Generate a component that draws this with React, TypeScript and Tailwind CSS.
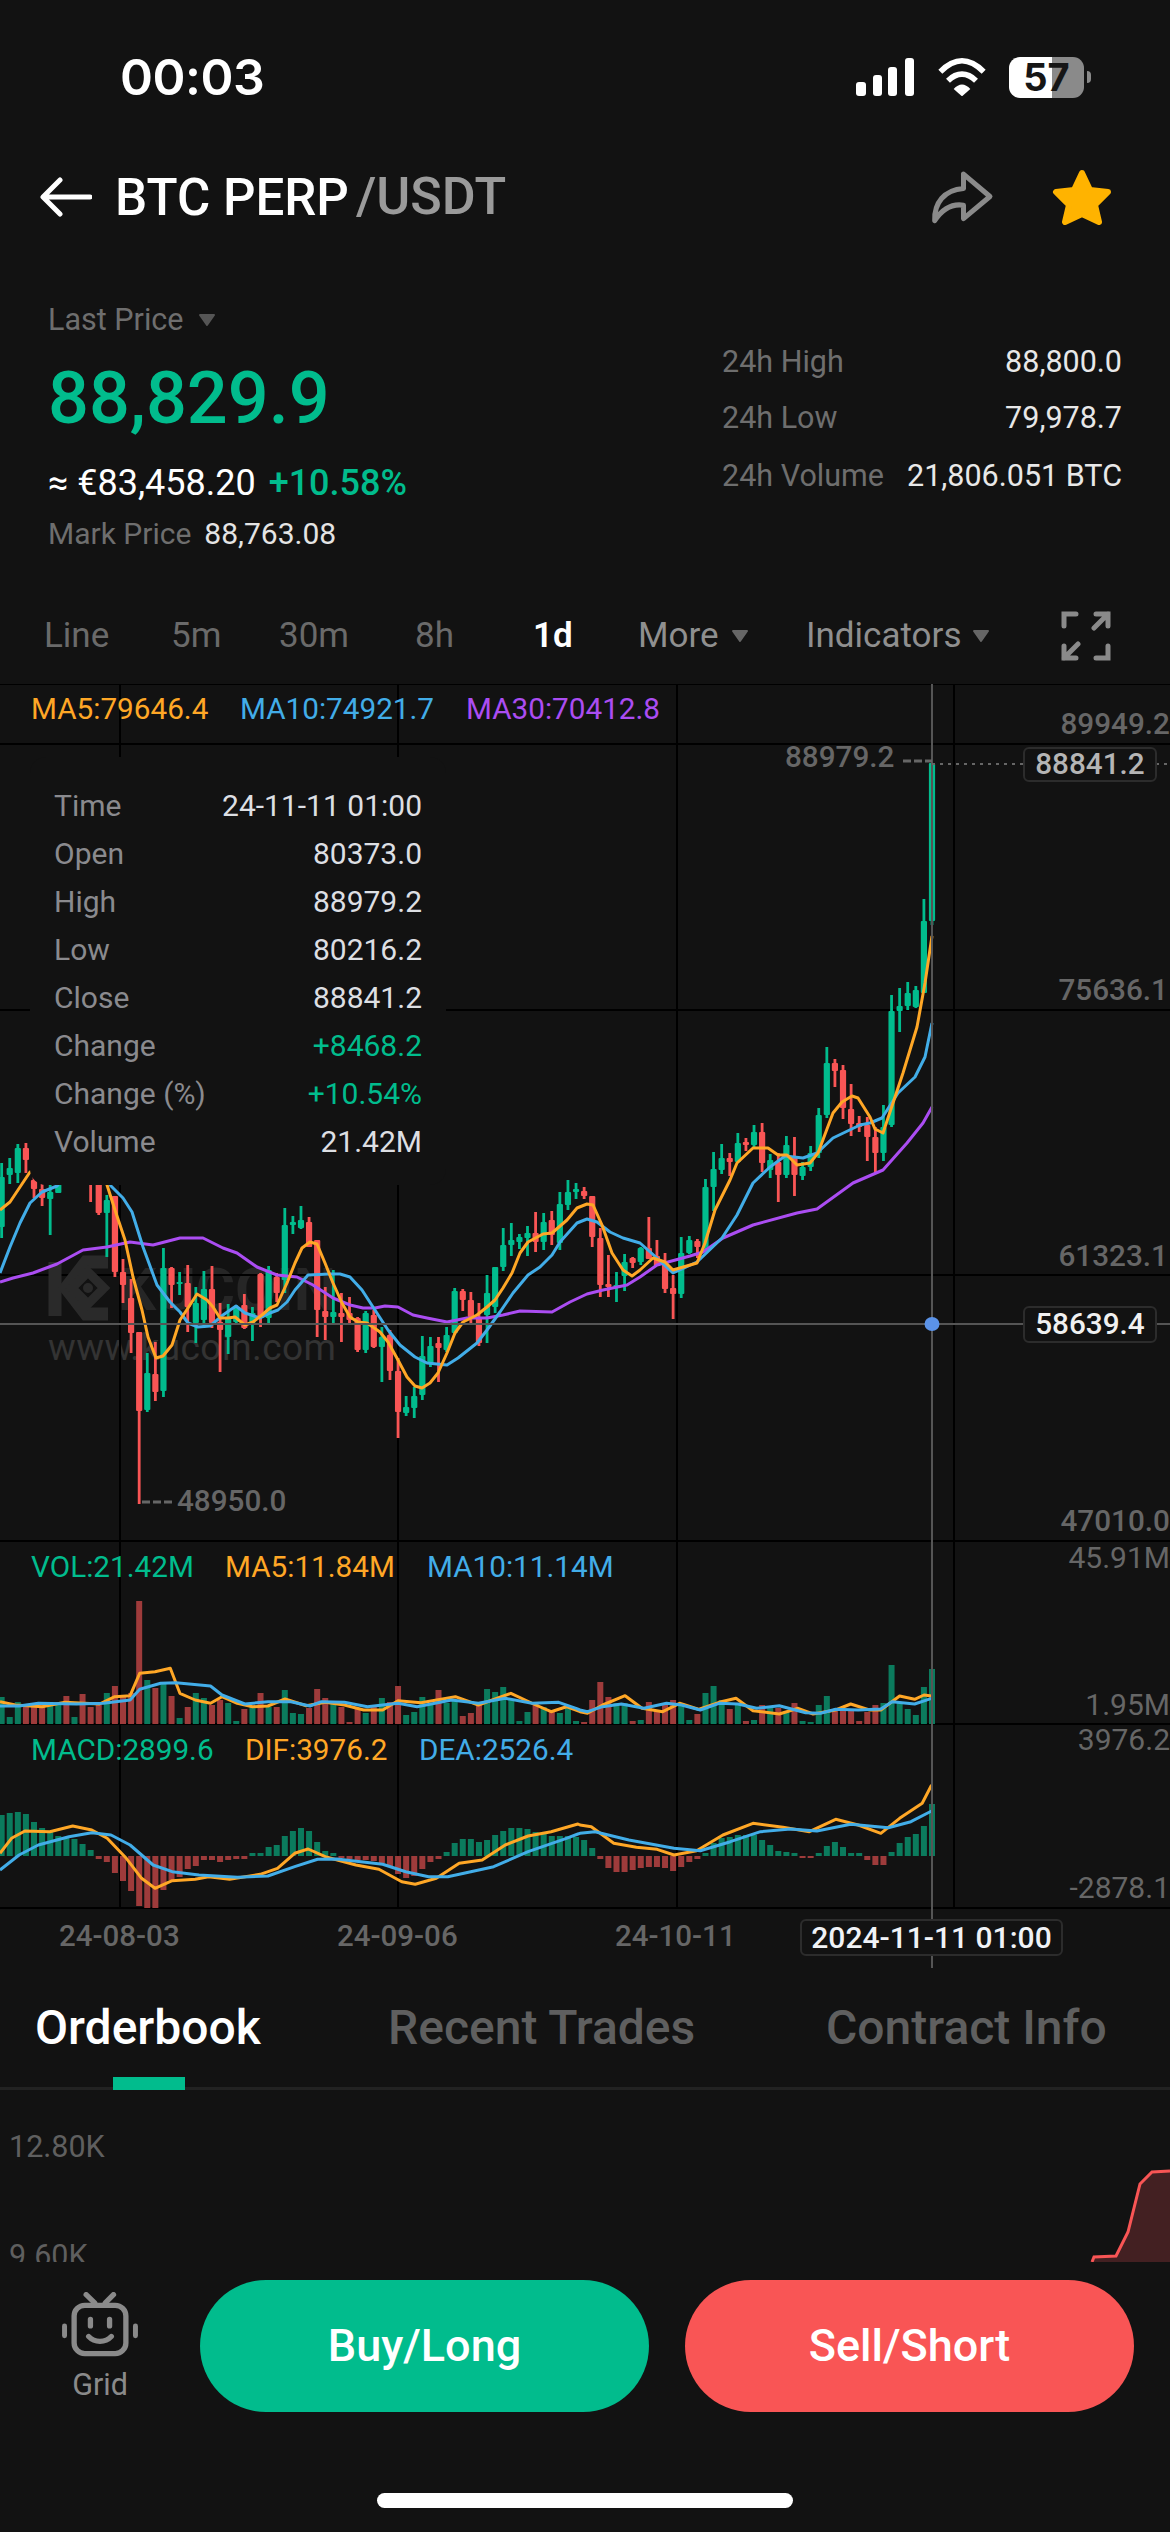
import React from "react";

const G = "#01bc8d";
const R = "#f95555";
const ORANGE = "#ffa726";
const BLUE = "#42ade8";
const PURPLE = "#ab4df2";

// colour (0 green, 1 red), high, body top, body bottom, low: index 0 is the newest candle
const candles: number[][] = [
  [0,763,763,921,925],[0,899,921,993,993],[0,986,990,1007,1008],[0,982,993,1006,1010],[0,988,1006,1011,1032],[0,995,1011,1125,1127],[0,1105,1127,1153,1161],[1,1127,1137,1153,1173],[1,1117,1125,1137,1161],[1,1116,1123,1127,1132],
  [1,1084,1109,1124,1136],[1,1065,1070,1108,1119],[1,1059,1063,1071,1087],[0,1047,1063,1115,1118],[0,1108,1115,1153,1158],[0,1146,1153,1167,1171],[0,1162,1167,1176,1180],[1,1137,1157,1175,1196],[0,1136,1145,1175,1178],[1,1153,1162,1175,1202],
  [0,1154,1160,1170,1178],[1,1123,1132,1163,1172],[0,1125,1132,1145,1147],[1,1138,1142,1145,1151],[0,1133,1143,1162,1163],[1,1153,1158,1162,1176],[0,1144,1158,1170,1174],[0,1152,1169,1187,1211],[0,1179,1187,1247,1250],[1,1239,1241,1247,1258],
  [0,1236,1240,1253,1254],[0,1237,1253,1294,1298],[1,1275,1288,1294,1319],[1,1253,1261,1289,1293],[1,1240,1256,1266,1266],[1,1217,1248,1259,1259],[0,1247,1248,1262,1265],[1,1257,1258,1263,1268],[0,1254,1262,1276,1291],[0,1272,1285,1287,1302],
  [1,1255,1284,1287,1297],[1,1228,1238,1285,1297],[1,1196,1196,1237,1247],[1,1187,1191,1196,1199],[0,1183,1189,1192,1199],[0,1180,1192,1205,1210],[0,1192,1204,1243,1250],[1,1211,1220,1235,1245],[0,1213,1222,1242,1250],[1,1212,1233,1242,1252],
  [0,1226,1233,1238,1256],[0,1234,1237,1242,1249],[0,1223,1240,1245,1256],[0,1228,1245,1267,1271],[0,1267,1267,1307,1313],[0,1275,1293,1315,1343],[1,1303,1318,1343,1346],[1,1292,1300,1317,1325],[1,1289,1291,1300,1311],[0,1288,1291,1333,1335],
  [0,1327,1335,1350,1352],[1,1337,1343,1348,1382],[0,1337,1346,1363,1367],[0,1336,1356,1395,1400],[0,1387,1396,1408,1418],[0,1396,1407,1413,1416],[1,1358,1371,1412,1438],[1,1330,1335,1371,1380],[0,1327,1337,1347,1382],[1,1310,1315,1347,1348],
  [0,1311,1313,1350,1353],[1,1317,1318,1350,1352],[1,1297,1313,1320,1323],[1,1293,1313,1317,1342],[0,1270,1312,1317,1324],[1,1287,1311,1317,1340],[1,1240,1240,1310,1337],[1,1217,1222,1247,1247],[0,1206,1220,1228,1229],[0,1216,1222,1225,1234],
  [0,1208,1225,1280,1293],[1,1273,1277,1293,1302],[0,1266,1270,1318,1323],[1,1273,1274,1318,1327],[0,1307,1313,1323,1341],[1,1294,1305,1328,1329],[0,1305,1307,1322,1323],[0,1304,1317,1337,1354],[1,1303,1322,1330,1372],[1,1266,1289,1323,1328],
  [0,1271,1289,1320,1328],[0,1287,1303,1323,1343],[1,1265,1283,1307,1332],[0,1272,1282,1284,1295],[1,1267,1268,1285,1308],[0,1248,1268,1391,1397],[1,1342,1374,1392,1401],[0,1353,1373,1410,1412],[1,1332,1332,1411,1504],[1,1279,1298,1333,1353],
  [1,1259,1272,1285,1303],[1,1196,1196,1272,1277],[0,1195,1200,1213,1257],[1,1160,1170,1213,1215],[1,1150,1160,1180,1202],[1,1130,1140,1170,1180],[0,1130,1140,1170,1180],[1,1130,1140,1170,1180],[0,1170,1178,1193,1193],[0,1170,1192,1199,1235],
  [1,1184,1189,1198,1206],[1,1176,1180,1189,1198],[1,1143,1148,1160,1173],[0,1144,1148,1173,1183],[0,1158,1168,1175,1184],[0,1163,1177,1227,1238],
];

const vol = [55,37,9,15,22,59,21,19,12,3,14,14,14,28,19,2,3,21,12,16,16,19,4,3,19,15,24,38,31,10,4,21,24,19,14,22,4,3,21,21,27,42,24,2,3,16,11,14,17,21,12,3,24,37,32,35,21,11,8,24,21,34,21,27,12,9,38,22,26,17,11,16,2,17,21,26,35,16,10,11,34,17,17,31,17,15,3,21,24,19,26,31,17,6,28,41,36,44,123,31,27,38,31,19,17,30,7,28,19,22,19,19,19,22,7,27];
const macd = [52,30,22,19,13,4,-9,-9,-4,3,3,9,14,10,3,-2,-2,3,4,5,11,16,21,21,21,19,18,13,3,-3,-6,-11,-15,-12,-11,-11,-12,-14,-16,-16,-12,-3,8,16,19,20,20,20,23,24,27,28,28,25,21,16,14,17,17,13,4,-3,-6,-13,-20,-22,-18,-10,-7,-5,-4,-4,-3,-2,3,5,14,25,28,25,20,11,9,3,3,-3,-3,-4,-6,-4,-4,-10,-13,-21,-24,-34,-52,-52,-50,-35,-25,-17,-6,-3,6,12,17,18,20,24,28,34,42,44,43,41];

const ma5 = "0,1210 10,1202 20,1187 30,1172 107,1160 107,1185 115,1210 125,1240 133,1277 142,1310 148,1337 156,1358 163,1356 172,1345 180,1320 188,1308 197,1294 207,1300 213,1307 220,1318 228,1318 235,1317 245,1325 253,1322 262,1315 270,1308 277,1305 287,1283 295,1263 302,1248 310,1242 317,1244 325,1263 333,1283 342,1303 350,1317 358,1322 367,1323 380,1332 388,1342 398,1360 407,1377 415,1386 422,1388 430,1383 438,1373 447,1353 455,1333 463,1322 477,1315 487,1307 495,1300 503,1288 512,1273 520,1253 528,1242 543,1234 552,1233 567,1220 577,1208 587,1204 593,1205 602,1225 612,1253 623,1270 632,1276 640,1270 653,1258 665,1262 673,1270 697,1263 705,1243 715,1210 730,1180 737,1163 753,1148 768,1148 778,1155 787,1155 797,1165 810,1163 818,1153 833,1113 842,1102 852,1096 858,1098 870,1117 875,1129 883,1133 893,1103 903,1073 917,1027 925,983 932,936";
const ma10 = "0,1273 10,1247 20,1223 30,1203 42,1192 57,1186 85,1150 110,1185 123,1198 132,1212 143,1247 157,1285 170,1302 180,1312 188,1323 198,1327 210,1326 223,1315 236,1306 245,1313 260,1318 270,1313 278,1310 287,1302 295,1290 308,1275 330,1274 340,1274 350,1277 362,1290 373,1307 388,1330 400,1345 415,1357 427,1363 447,1365 458,1358 477,1343 487,1330 500,1312 513,1293 528,1275 540,1267 552,1255 560,1242 577,1223 587,1219 597,1222 610,1232 623,1238 640,1243 657,1258 673,1273 697,1262 722,1238 737,1215 753,1183 770,1167 785,1156 803,1158 817,1153 833,1138 860,1125 870,1123 882,1118 898,1093 915,1077 925,1057 932,1023";
const ma30 = "0,1282 13,1278 33,1273 57,1264 83,1250 107,1247 130,1242 153,1245 180,1238 203,1238 223,1248 237,1253 257,1267 277,1275 297,1277 313,1285 333,1298 350,1305 363,1308 375,1308 385,1306 398,1307 413,1315 427,1318 447,1322 467,1318 487,1318 503,1315 520,1311 552,1312 570,1302 587,1294 603,1290 627,1285 640,1277 657,1265 690,1256 703,1252 723,1238 753,1225 797,1213 817,1209 853,1183 883,1170 907,1143 923,1123 932,1107";

// lower panels, measured as x and y offset inside the panel
const toPts = (l: number[][], off: number) => l.map(([x, y]) => `${(off + x * (off ? 0.376 : 0.3827)).toFixed(1)},${(1530 + y / 3).toFixed(1)}`);
const join = (a: number[][], b: number[][]) => [...toPts(a, 0), ...toPts(b, 580)].join(" ");

const volOrange = join([[0,515],[40,525],[110,530],[170,517],[260,522],[300,500],[340,497],[365,430],[405,425],[445,415],[470,490],[510,510],[550,520],[580,500],[620,520],[660,530],[700,528],[745,507],[800,527],[850,517],[900,525],[950,540],[1000,540],[1040,512],[1100,518],[1190,500],[1250,525],[1335,490],[1400,525],[1440,545],[1480,530]],[[0,545],[20,550],[60,525],[120,497],[165,535],[220,545],[265,520],[315,538],[370,517],[415,505],[460,542],[530,552],[580,535],[620,552],[680,540],[720,522],[770,540],[800,540],[850,498],[890,508],[915,495],[935,498]]);
const volBlue = join([[0,528],[50,528],[100,520],[200,522],[270,520],[340,510],[365,478],[420,460],[460,458],[550,468],[580,495],[640,522],[700,515],[760,515],[810,528],[840,515],[900,517],[960,530],[1040,520],[1090,530],[1180,510],[1250,520],[1320,505],[1390,520],[1460,517],[1505,535]],[[0,540],[20,545],[60,530],[110,522],[170,535],[230,520],[270,525],[320,540],[370,520],[420,522],[470,535],[530,527],[600,548],[640,550],[680,538],[740,540],[800,537],[830,515],[890,522],[935,505]]);
const difLine = join([[0,970],[30,925],[65,903],[130,905],[190,888],[240,900],[280,925],[330,985],[370,1045],[405,1075],[450,1052],[510,1048],[545,1040],[600,1048],[680,1033],[725,1015],[770,970],[805,957],[850,980],[930,1005],[990,1018],[1050,1055],[1085,1063],[1140,1045],[1200,1000],[1260,990],[1320,945],[1380,918],[1440,905],[1510,882]],[[0,885],[30,890],[90,940],[150,952],[205,958],[250,975],[310,962],[380,915],[460,880],[540,892],[610,905],[680,868],[740,885],[800,910],[850,865],[910,820],[935,765]]);
const deaLine = join([[0,1020],[50,975],[100,945],[180,920],[240,908],[290,915],[340,945],[400,1005],[450,1025],[520,1035],[620,1042],[700,1038],[770,1010],[830,988],[880,987],[1000,1003],[1060,1025],[1120,1040],[1170,1040],[1290,1010],[1380,965],[1480,925],[1510,912]],[[0,910],[40,905],[130,930],[250,955],[320,962],[400,935],[480,905],[560,897],[630,903],[720,883],[820,893],[880,875],[935,843]]);

const STEP = 8.09;
const xAt = (i: number) => 932 - i * STEP;

function Chart() {
  return (
    <svg className="absolute left-0 top-0 h-[1284px] w-[1170px]" viewBox="0 684 1170 1284">
      <g stroke="#000" strokeWidth="2">
        {[684, 744, 1010, 1275, 1541, 1724, 1908].map((y) => <line key={y} x1="0" x2="1170" y1={y} y2={y} />)}
        {[120, 398, 677, 954].map((x) => <line key={x} x1={x} x2={x} y1="684" y2="1908" />)}
      </g>

      {/* watermark */}
      <g fill="none" stroke="#2a2a2a" strokeWidth="13" strokeLinejoin="miter">
        <path d="M55 1262 V1316" />
        <path d="M108 1262 L86 1262 L66 1288 L86 1314 L108 1314" />
        <path d="M88 1272 L72 1288 L88 1304 L104 1288 Z" strokeWidth="9" />
      </g>
      <circle cx="88" cy="1288" r="5" fill="#2a2a2a" />

      {candles.map(([c, hi, top, bot, lo], i) => {
        const x = xAt(i);
        const col = c ? R : G;
        return (
          <g key={i}>
            <rect x={x - 1.4} y={hi} width="2.8" height={lo - hi} fill={col} />
            <rect x={x - 3.1} y={top} width="6.2" height={Math.max(bot - top, 2)} rx="1" fill={col} />
          </g>
        );
      })}
      <polyline points={ma30} fill="none" stroke={PURPLE} strokeWidth="3" strokeLinejoin="round" />
      <polyline points={ma10} fill="none" stroke={BLUE} strokeWidth="3" strokeLinejoin="round" />
      <polyline points={ma5} fill="none" stroke={ORANGE} strokeWidth="3" strokeLinejoin="round" />

      {/* volume */}
      {vol.map((h, i) => (
        <rect key={i} x={xAt(i) - 3} y={1724 - h} width="6" height={h} fill={candles[i][0] ? "#9e3b3b" : "#0b7b5d"} />
      ))}
      <polyline points={volOrange} fill="none" stroke={ORANGE} strokeWidth="3" strokeLinejoin="round" />
      <polyline points={volBlue} fill="none" stroke={BLUE} strokeWidth="3" strokeLinejoin="round" />

      {/* macd */}
      {macd.map((h, i) => (
        <rect key={i} x={xAt(i) - 3} y={h > 0 ? 1856 - h : 1856} width="6" height={Math.abs(h)} fill={h > 0 ? "#0b7b5d" : "#9e3b3b"} />
      ))}
      <polyline points={difLine} fill="none" stroke={ORANGE} strokeWidth="3" strokeLinejoin="round" />
      <polyline points={deaLine} fill="none" stroke={BLUE} strokeWidth="3" strokeLinejoin="round" />

      {/* guides */}
      <line x1="932" x2="932" y1="684" y2="1968" stroke="#555" strokeWidth="2" />
      <line x1="0" x2="1170" y1="1324" y2="1324" stroke="#555" strokeWidth="2" />
      <ellipse cx="932" cy="1324" rx="7.5" ry="7" fill="#5b93e8" />
      <line x1="932" x2="1170" y1="764" y2="764" stroke="#666" strokeWidth="2" strokeDasharray="3 5" />
      <path d="M903 761 h8 M914 761 h8 M925 761 h7 M142 1502 h8 M153 1502 h8 M164 1502 h8" stroke="#666" strokeWidth="3" fill="none" />
    </svg>
  );
}

function Label({ className, children }: { className: string; children: React.ReactNode }) {
  return <div className={`absolute whitespace-nowrap leading-[36px] ${className}`}>{children}</div>;
}

const Row = ({ k, v, c = "text-[#dddfe3]" }: { k: string; v: string; c?: string }) => (
  <div className="flex h-[48px] items-center justify-between">
    <span className="text-[#8a8a8e]">{k}</span>
    <span className={c}>{v}</span>
  </div>
);

const Tri = ({ className }: { className: string }) => (
  <svg className={className} viewBox="0 0 18 14"><path d="M2 2 H16 L9 12 Z" fill="currentColor" stroke="currentColor" strokeWidth="2" strokeLinejoin="round" /></svg>
);

export default function App() {
  return (
    <div className="relative h-[2532px] w-[1170px] overflow-hidden bg-[#121212] font-['Roboto',sans-serif] text-white">
      {/* status bar */}
      <div className="flex h-[154px] items-center">
        <div className="ml-[120px] font-['Inter',sans-serif] text-[50px] font-semibold leading-none tracking-[-0.5px]">00:03</div>
        <svg className="ml-auto h-[38px] w-[58px]" viewBox="856 58 58 38" fill="#fff">
          <rect x="856" y="82" width="10" height="14" rx="3" /><rect x="873" y="75" width="9" height="21" rx="3" /><rect x="888" y="67" width="9" height="29" rx="3" /><rect x="905" y="58" width="9" height="38" rx="3" />
        </svg>
        <svg className="ml-[23px] h-[38px] w-[50px]" viewBox="230 175 150 114" fill="none">
          <path d="M240 216 C285 172 325 172 370 216" stroke="#fff" strokeWidth="17" />
          <path d="M263 243 C290 217 320 217 347 243" stroke="#fff" strokeWidth="17" />
          <path d="M280 268 C296 250 314 250 330 268 L305 290 Z" fill="#fff" />
        </svg>
        <div className="relative ml-[22px] flex h-[41px] w-[75px] items-center justify-center">
          <div className="absolute inset-y-0 left-0 w-[43px] rounded-l-[11px] bg-white" />
          <div className="absolute inset-y-0 right-0 w-[32px] rounded-r-[11px] bg-[#8a8a8a]" />
          <span className="relative font-['Inter',sans-serif] text-[38px] font-bold leading-none text-[#161616]">57</span>
        </div>
        <div className="ml-[3px] mr-[79px] h-[12px] w-[4px] rounded-r-full bg-[#8a8a8a]" />
      </div>

      {/* nav */}
      <div className="flex h-[86px] items-center">
        <svg className="ml-[40px] h-[40px] w-[52px]" viewBox="0 0 52 40" fill="none" stroke="#fff" strokeWidth="5" strokeLinecap="round" strokeLinejoin="round">
          <path d="M50 20 H4 M20 3 L3 20 L20 37" />
        </svg>
        <span className="ml-[23px] text-[51px] font-medium leading-none">BTC PERP</span>
        <span className="ml-[7px] text-[52px] font-medium leading-none text-[#9a9a9a]">/USDT</span>
        <svg className="ml-auto h-[57px] w-[67px]" viewBox="200 510 200 170" fill="none" stroke="#8a8a8a" strokeWidth="15" strokeLinejoin="round">
          <path d="M303 525 L382 592 L303 658 L303 618 C265 612 238 632 217 664 C215 612 245 572 303 568 Z" />
        </svg>
        <svg className="ml-[56px] mr-[58px] h-[57px] w-[60px]" viewBox="0 0 60 57">
          <path d="M30 4 L38 21 L56 23 L43 36 L47 53 L30 45 L13 53 L17 36 L4 23 L22 21 Z" fill="#ffb300" stroke="#ffb300" strokeWidth="6" strokeLinejoin="round" />
        </svg>
      </div>

      {/* price info */}
      <div className="flex h-[360px] justify-between">
        <div className="pl-[48px] pt-[62px]">
          <div className="flex h-[36px] items-center text-[30.5px] text-[#6e6e6e]">Last Price<Tri className="ml-[15px] h-[14px] w-[18px] text-[#555]" /></div>
          <div className="mt-[19px] h-[84px] text-[72px] font-medium leading-[84px] text-[#01bc8d]">88,829.9</div>
          <div className="mt-[20px] flex h-[44px] items-center text-[36px] leading-[44px]"><span>≈ €83,458.20</span><span className="ml-[13px] font-medium text-[#01bc8d]">+10.58%</span></div>
          <div className="mt-[10px] flex h-[36px] items-center text-[30px]"><span className="text-[#6e6e6e]">Mark Price</span><span className="ml-[13px] text-[#e4e4e4]">88,763.08</span></div>
        </div>
        <div className="mr-[48px] w-[400px] pt-[104px] text-[30.5px] leading-[36px]">
          <div className="flex justify-between"><span className="text-[#6e6e6e]">24h High</span><span className="text-[#e8e8e8]">88,800.0</span></div>
          <div className="mt-[20px] flex justify-between"><span className="text-[#6e6e6e]">24h Low</span><span className="text-[#e8e8e8]">79,978.7</span></div>
          <div className="mt-[22px] flex justify-between"><span className="text-[#6e6e6e]">24h Volume</span><span className="text-[#e8e8e8]">21,806.051 BTC</span></div>
        </div>
      </div>

      {/* interval tabs */}
      <div className="flex h-[84px] items-start pl-[44px] text-[35px] leading-[72px] text-[#6a6a6a]">
        <div className="w-[127px]">Line</div>
        <div className="w-[108px]">5m</div>
        <div className="w-[136px]">30m</div>
        <div className="w-[118px]">8h</div>
        <div className="w-[105px] font-semibold text-white">1d</div>
        <div className="flex h-[72px] w-[168px] items-center text-[#8f8f8f]">More<Tri className="ml-[12px] h-[14px] w-[18px] text-[#666]" /></div>
        <div className="flex h-[72px] w-[255px] items-center text-[#8f8f8f]">Indicators<Tri className="ml-[11px] h-[14px] w-[18px] text-[#666]" /></div>
        <svg className="mt-[11px] h-[50px] w-[50px]" viewBox="0 0 50 50" fill="none" stroke="#8a8a8a" strokeWidth="5" strokeLinecap="round">
          <path d="M3 15 V3 H15 M35 3 H47 V15 M47 3 L33 17 M3 35 V47 H15 M3 47 L17 33 M47 35 V47 H35" />
        </svg>
      </div>

      {/* chart */}
      <div className="relative h-[1284px] w-[1170px] text-[29.7px]">
        {/* watermark text under the chart */}
        <Label className="left-[118px] top-[588px] text-[60px] font-bold text-[#262626]">KUCOIN</Label>
        <Label className="left-[48px] top-[646px] text-[37px] tracking-[0.4px] text-[#333]">www.kucoin.com</Label>
        <Chart />

        <Label className="left-[31px] top-[7px] text-[#ffa726]">MA5:79646.4</Label>
        <Label className="left-[240px] top-[7px] text-[#42ade8]">MA10:74921.7</Label>
        <Label className="left-[466px] top-[7px] text-[#ab4df2]">MA30:70412.8</Label>

        <Label className="right-0 top-[22px] text-[29.7px] font-medium text-[#666]">89949.2</Label>
        <Label className="right-[2px] top-[288px] text-[29.7px] font-medium text-[#666]">75636.1</Label>
        <Label className="right-[2px] top-[554px] text-[29.7px] font-medium text-[#666]">61323.1</Label>
        <Label className="right-0 top-[819px] text-[29.7px] font-medium text-[#666]">47010.0</Label>
        <Label className="left-[785px] top-[55px] text-[29.7px] font-medium text-[#666]">88979.2</Label>
        <Label className="left-[177px] top-[799px] text-[29.7px] font-medium text-[#666]">48950.0</Label>

        <div className="absolute left-[1023px] top-[63px] flex h-[35px] w-[134px] items-center justify-center rounded-[6px] border-2 border-[#2c2c2c] bg-[#121212] text-[29.7px] font-medium text-[#b5b5b5]">88841.2</div>
        <div className="absolute left-[1023px] top-[622px] flex h-[37px] w-[134px] items-center justify-center rounded-[6px] border-2 border-[#2c2c2c] bg-[#121212] text-[29.7px] font-medium text-[#f0f0f0]">58639.4</div>

        <Label className="left-[31px] top-[865px] text-[#01bc8d]">VOL:21.42M</Label>
        <Label className="left-[225px] top-[865px] text-[#ffa726]">MA5:11.84M</Label>
        <Label className="left-[427px] top-[865px] text-[#42ade8]">MA10:11.14M</Label>
        <Label className="right-0 top-[856px] text-[30px] text-[#666]">45.91M</Label>
        <Label className="right-0 top-[1003px] text-[30px] text-[#666]">1.95M</Label>

        <Label className="left-[31px] top-[1048px] text-[#01bc8d]">MACD:2899.6</Label>
        <Label className="left-[245px] top-[1048px] text-[#ffa726]">DIF:3976.2</Label>
        <Label className="left-[419px] top-[1048px] text-[#42ade8]">DEA:2526.4</Label>
        <Label className="right-0 top-[1038px] text-[30px] text-[#666]">3976.2</Label>
        <Label className="right-0 top-[1186px] text-[30px] text-[#666]">-2878.1</Label>

        <Label className="left-[59px] top-[1234px] text-[29.5px] font-medium text-[#666]">24-08-03</Label>
        <Label className="left-[337px] top-[1234px] text-[29.5px] font-medium text-[#666]">24-09-06</Label>
        <Label className="left-[615px] top-[1234px] text-[29.5px] font-medium text-[#666]">24-10-11</Label>
        <div className="absolute left-[800px] top-[1235px] flex h-[37px] w-[263px] items-center justify-center rounded-[6px] border-2 border-[#2c2c2c] bg-[#121212] text-[30px] font-medium text-[#f0f2f6]">2024-11-11 01:00</div>

        {/* crosshair tooltip */}
        <div className="absolute left-[30px] top-[73px] h-[428px] w-[416px] rounded-[16px] bg-[#121212] px-[24px] pt-[24px] text-[30px]">
          <Row k="Time" v="24-11-11 01:00" />
          <Row k="Open" v="80373.0" />
          <Row k="High" v="88979.2" />
          <Row k="Low" v="80216.2" />
          <Row k="Close" v="88841.2" />
          <Row k="Change" v="+8468.2" c="text-[#01bc8d]" />
          <Row k="Change (%)" v="+10.54%" c="text-[#01bc8d]" />
          <Row k="Volume" v="21.42M" />
        </div>
      </div>

      {/* lower tabs */}
      <div className="relative flex h-[122px] items-start border-b-[3px] border-[#222] pl-[35px] pt-[35px] text-[48px] font-medium leading-[50px] text-[#5f5f5f]">
        <div className="w-[353px] text-white">Orderbook</div>
        <div className="w-[438px]">Recent Trades</div>
        <div>Contract Info</div>
        <div className="absolute bottom-[-3px] left-[113px] h-[13px] w-[72px] bg-[#01bc8d]" />
      </div>

      {/* depth */}
      <div className="relative h-[172px] overflow-hidden">
        <Label className="left-[9px] top-[39px] text-[30.5px] text-[#5f5f5f]">12.80K</Label>
        <Label className="left-[9px] top-[148px] text-[30.5px] text-[#5f5f5f]">9.60K</Label>
        <svg className="absolute right-0 top-0 h-[172px] w-[80px]" viewBox="1090 2090 80 172">
          <path d="M1092 2262 L1094 2257 L1116 2256 L1128 2232 L1140 2184 L1152 2172 L1170 2171 V2262 Z" fill="#432022" />
          <path d="M1092 2262 L1094 2257 L1116 2256 L1128 2232 L1140 2184 L1152 2172 L1170 2171" fill="none" stroke="#f95555" strokeWidth="3" />
        </svg>
      </div>

      {/* actions */}
      <div className="relative h-[270px] bg-[#121212]">
        <div className="mt-[18px] flex h-[132px] items-center">
          <div className="flex w-[200px] flex-col items-center">
            <svg className="mt-[2px] h-[66px] w-[78px]" viewBox="70 95 220 185" fill="none" stroke="#8a8a8a" strokeWidth="15" strokeLinecap="round">
              <rect x="107" y="132" width="146" height="136" rx="30" />
              <path d="M141 102 L165 125 M218 102 L195 125" />
              <path d="M80 190 V218 M280 190 V218" strokeWidth="14" />
              <path d="M153 172 V190 M207 172 V190" />
              <path d="M148 220 C165 238 195 238 212 220" />
            </svg>
            <span className="mt-[9px] text-[30.5px] leading-[36px] text-[#8a8a8a]">Grid</span>
          </div>
          <div className="flex h-[132px] w-[449px] items-center justify-center rounded-full bg-[#01bc8d] text-[45px] font-medium">Buy/Long</div>
          <div className="ml-[36px] flex h-[132px] w-[449px] items-center justify-center rounded-full bg-[#f95555] text-[45px] font-medium">Sell/Short</div>
        </div>
        <div className="mx-auto mt-[81px] h-[15px] w-[416px] rounded-full bg-white" />
      </div>
    </div>
  );
}
